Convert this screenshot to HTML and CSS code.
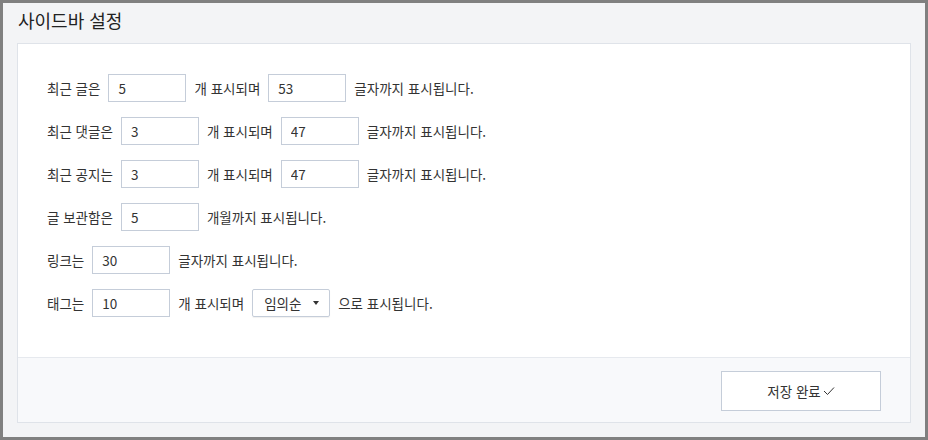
FILE: index.html
```html
<!DOCTYPE html>
<html lang="ko">
<head>
    <meta charset="UTF-8">
    <title>사이드바 설정</title>
    <link rel="stylesheet" href="styles.css">
</head>
<body>
<div class="frame">
    <h1 class="title">사이드바 설정</h1>
    <div class="panel">
        <div class="rows">
            <div class="row">
                <span>최근 글은</span>
                <input class="field" type="text" value="5">
                <span>개 표시되며</span>
                <input class="field" type="text" value="53">
                <span>글자까지 표시됩니다.</span>
            </div>
            <div class="row">
                <span>최근 댓글은</span>
                <input class="field" type="text" value="3">
                <span>개 표시되며</span>
                <input class="field" type="text" value="47">
                <span>글자까지 표시됩니다.</span>
            </div>
            <div class="row">
                <span>최근 공지는</span>
                <input class="field" type="text" value="3">
                <span>개 표시되며</span>
                <input class="field" type="text" value="47">
                <span>글자까지 표시됩니다.</span>
            </div>
            <div class="row">
                <span>글 보관함은</span>
                <input class="field" type="text" value="5">
                <span>개월까지 표시됩니다.</span>
            </div>
            <div class="row">
                <span>링크는</span>
                <input class="field" type="text" value="30">
                <span>글자까지 표시됩니다.</span>
            </div>
            <div class="row">
                <span>태그는</span>
                <input class="field" type="text" value="10">
                <span>개 표시되며</span>
                <div class="select">
                    <span>임의순</span>
                    <span class="arrow"></span>
                </div>
                <span>으로 표시됩니다.</span>
            </div>
        </div>
        <div class="footer">
            <button class="save">저장 완료<svg width="12" height="10" viewBox="0 0 12 10"><path d="M1 5 L4.5 8.5 L11 1.5" fill="none" stroke="#333" stroke-width="1"/></svg></button>
        </div>
    </div>
</div>
</body>
</html>
```

FILE: styles.css
```css
*{
    margin: 0;
    padding: 0;
    box-sizing: border-box;
}
body{
    font-family: "Noto Sans CJK KR", "Noto Sans", sans-serif;
    color: #333;
    background: #808080;
}
.frame{
    width: 928px;
    height: 440px;
    border: 3px solid #808080;
    background: #f3f4f6;
    padding: 0 14px 14px 14px;
    display: flex;
    flex-direction: column;
}
.title{
    font-size: 18px;
    font-weight: normal;
    color: #222;
    height: 40px;
    line-height: 34px;
    padding-left: 1px;
}
.panel{
    flex: 1;
    background: #fff;
    border: 1px solid #dfe3e9;
    display: flex;
    flex-direction: column;
}
.rows{
    flex: 1;
    padding: 30px 29px 0 29px;
    display: flex;
    flex-direction: column;
    gap: 15px;
}
.row{
    display: flex;
    align-items: center;
    height: 28px;
    font-size: 13.5px;
    gap: 8px;
}
.field{
    width: 78px;
    height: 28px;
    border: 1px solid #c5cdd9;
    padding: 0 9px;
    font-family: inherit;
    font-size: 13.5px;
    color: #333;
    outline: none;
}
.select{
    width: 78px;
    height: 28px;
    border: 1px solid #c5cdd9;
    border-radius: 2px;
    padding: 0 10px 0 11px;
    display: flex;
    align-items: center;
    justify-content: space-between;
    box-shadow: 0 1px 1px rgba(0,0,0,0.06);
}
.arrow{
    width: 0;
    height: 0;
    border-left: 3.5px solid transparent;
    border-right: 3.5px solid transparent;
    border-top: 4px solid #333;
}
.footer{
    height: 65px;
    background: #f8f9fb;
    border-top: 1px solid #e6e9ee;
    display: flex;
    align-items: center;
    justify-content: flex-end;
    padding-right: 29px;
}
.save{
    width: 160px;
    height: 40px;
    background: #fff;
    border: 1px solid #c5cdd9;
    font-family: inherit;
    font-size: 13.5px;
    color: #333;
    display: flex;
    align-items: center;
    justify-content: center;
    gap: 2px;
    margin-top: 1px;
}
```
